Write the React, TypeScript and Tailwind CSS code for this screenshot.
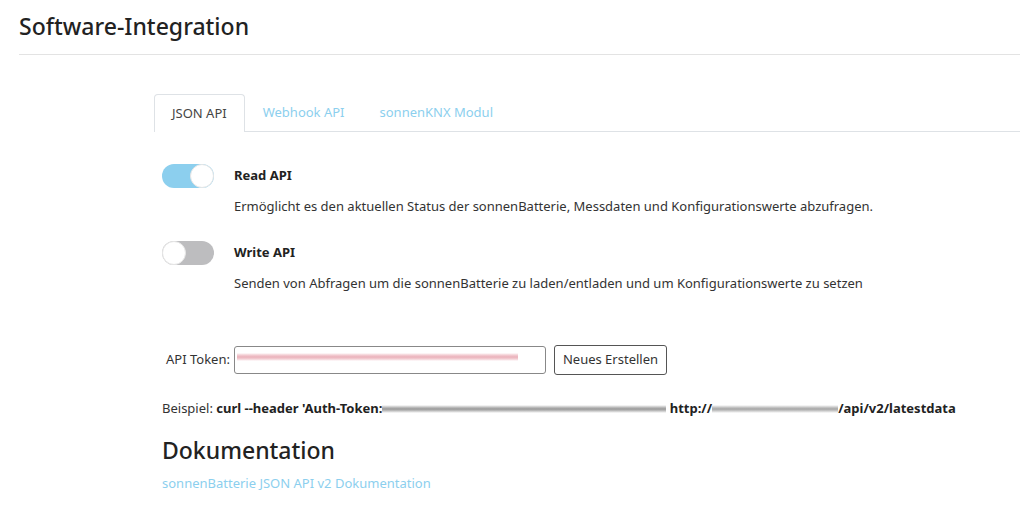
import React from "react";

function Toggle({ on }: { on: boolean }) {
  return (
    <div
      className={`relative w-[52px] h-[24px] rounded-full shrink-0 ${on ? "bg-[#8ccfee]" : "bg-[#bdbdbf]"}`}
    >
      <div
        className={`absolute top-0 w-[24px] h-[24px] rounded-full bg-white border border-[#e6e6e6] ${on ? "right-0" : "left-0"}`}
      />
    </div>
  );
}

export default function App() {
  return (
    <div className="w-[1020px] h-[522px] bg-white text-[#222] overflow-hidden font-['Noto_Sans',sans-serif]">
      <div className="pl-[19px]">
        <h1 className="text-[23px] font-medium text-[#222] pt-[10px] h-[55px] leading-[32px] border-b border-[#e3e3e3]">
          Software-Integration
        </h1>
      </div>
      <div className="pl-[154px] pt-[39px]">
        <div className="flex border-b border-[#dee2e6] h-[38px] text-[13px]">
          <div className="px-[17px] h-[38px] flex items-center border border-b-0 border-[#dee2e6] rounded-t-[4px] bg-white text-[#444] -mb-px">
            JSON API
          </div>
          <div className="pl-[18px] pr-[19px] h-[37px] flex items-center text-[#8ccfee]">Webhook API</div>
          <div className="px-[16px] h-[37px] flex items-center text-[#8ccfee]">sonnenKNX Modul</div>
        </div>
        <div className="pl-[8px] pt-[32px] text-[13px]">
          <div className="flex">
            <Toggle on={true} />
            <div className="pl-[20px]">
              <div className="font-bold leading-[22px]">Read API</div>
              <div className="mt-[11px] leading-[18px] text-[#333]">
                Ermöglicht es den aktuellen Status der sonnenBatterie, Messdaten und Konfigurationswerte abzufragen.
              </div>
            </div>
          </div>
          <div className="flex mt-[26px]">
            <Toggle on={false} />
            <div className="pl-[20px]">
              <div className="font-bold leading-[22px]">Write API</div>
              <div className="mt-[11px] leading-[18px] text-[#333]">
                Senden von Abfragen um die sonnenBatterie zu laden/entladen und um Konfigurationswerte zu setzen
              </div>
            </div>
          </div>
          <div className="flex items-center mt-[53px]">
            <span className="pl-[4px] pr-[4px] text-[#333]">API Token:</span>
            <div className="relative w-[312px] h-[28px] border border-[#888] rounded-[3px] bg-white">
              <div className="absolute left-[2px] top-[6px] w-[281px] h-[8px] bg-[linear-gradient(180deg,#fff_0%,#f2c9cf_25%,#e8a9b3_50%,#f2c9cf_75%,#fff_100%)] opacity-90" />
            </div>
            <button className="ml-[8px] h-[30px] px-[8px] border border-[#555] rounded-[3px] bg-white text-[#333] text-[13px]">
              Neues Erstellen
            </button>
          </div>
          <div className="flex items-center mt-[25px] h-[18px] text-[#333] whitespace-nowrap">
            <span>Beispiel:&nbsp;</span>
            <span className="font-bold text-[#222]">curl --header 'Auth-Token:</span>
            <span className="inline-block w-[284px] h-[8px] bg-[linear-gradient(180deg,#fff_0%,#bbb_30%,#999_50%,#bbb_70%,#fff_100%)]" />
            <span className="font-bold text-[#222]">&nbsp;http://</span>
            <span className="inline-block w-[126px] h-[8px] bg-[linear-gradient(180deg,#fff_0%,#c4c4c4_30%,#a5a5a5_50%,#c4c4c4_70%,#fff_100%)]" />
            <span className="font-bold text-[#222]">/api/v2/latestdata</span>
          </div>
          <h2 className="text-[23px] font-medium text-[#222] mt-[17px] leading-[30px]">Dokumentation</h2>
          <div className="mt-[9px] text-[#8ccfee]">sonnenBatterie JSON API v2 Dokumentation</div>
        </div>
      </div>
    </div>
  );
}
